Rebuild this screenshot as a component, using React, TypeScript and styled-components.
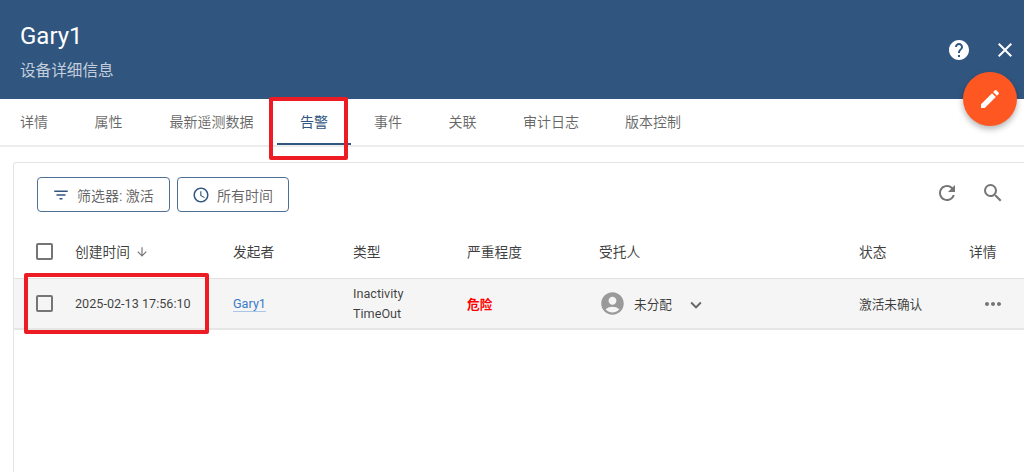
import React from 'react';
import styled, { createGlobalStyle } from 'styled-components';
import {
  MdAccessTime,
  MdAccountCircle,
  MdArrowDownward,
  MdClose,
  MdEdit,
  MdExpandMore,
  MdFilterList,
  MdHelp,
  MdMoreHoriz,
  MdRefresh,
  MdSearch,
} from 'react-icons/md';

const GlobalStyle = createGlobalStyle`
  html, body {
    margin: 0;
    padding: 0;
    width: 1024px;
    height: 472px;
    overflow: hidden;
    background: #fff;
    font-family: Roboto, "Noto Sans CJK SC", sans-serif;
  }
  * { box-sizing: border-box; }
`;

const Page = styled.div`
  position: relative;
  width: 1024px;
  height: 472px;
  overflow: hidden;
`;

const Header = styled.header`
  height: 99px;
  background: #305680;
  color: #fff;
  display: flex;
  justify-content: space-between;
  padding: 22px 7px 0 20px;
`;

const Title = styled.div`
  font-size: 24px;
  line-height: 28px;
`;

const Subtitle = styled.div`
  font-size: 15.6px;
  line-height: 20px;
  margin-top: 11px;
  color: rgba(255, 255, 255, 0.72);
`;

const HeaderActions = styled.div`
  display: flex;
  gap: 22px;
  padding-top: 16px;
  font-size: 24px;
  height: 40px;
`;

const Fab = styled.button`
  position: absolute;
  left: 963px;
  top: 72px;
  width: 54px;
  height: 54px;
  border: 0;
  border-radius: 50%;
  background: #ff5722;
  color: #fff;
  display: flex;
  align-items: center;
  justify-content: center;
  font-size: 24px;
  box-shadow: 0 3px 6px rgba(0, 0, 0, 0.3);
`;

const Tabs = styled.nav`
  height: 48px;
  display: flex;
  border-bottom: 2px solid #ececec;
`;

const Tab = styled.div<{ $width: number; $active?: boolean; $first?: boolean }>`
  width: ${p => p.$width}px;
  height: 46px;
  margin-left: ${p => (p.$first ? -3 : 0)}px;
  display: flex;
  align-items: center;
  justify-content: center;
  font-size: 14px;
  color: ${p => (p.$active ? '#305680' : 'rgba(0, 0, 0, 0.6)')};
  border-bottom: 2px solid ${p => (p.$active ? '#305680' : 'transparent')};
`;

const Card = styled.section`
  margin: 15px -10px 0 13px;
  border: 1px solid #e4e4e4;
  border-bottom: 0;
  border-radius: 3px 0 0 0;
  height: 325px;
`;

const Toolbar = styled.div`
  height: 49px;
  padding: 14px 28px 0 23px;
  display: flex;
  align-items: flex-start;
  gap: 7px;
`;

const OutlineButton = styled.button<{ $width: number }>`
  width: ${p => p.$width}px;
  height: 35px;
  padding: 0 0 0 14px;
  background: #fff;
  border: 1px solid #4f7096;
  border-radius: 4px;
  display: flex;
  align-items: center;
  gap: 7px;
  font-family: inherit;
  font-size: 14px;
  color: rgba(0, 0, 0, 0.62);
  white-space: nowrap;
  svg {
    color: #305680;
    font-size: 18px;
    flex: none;
  }
`;

const ToolbarIcons = styled.div`
  margin-left: auto;
  display: flex;
  gap: 22px;
  padding-top: 4px;
  font-size: 24px;
  color: #757575;
`;

const Row = styled.div<{ $head?: boolean }>`
  display: grid;
  grid-template-columns: 39px 158px 120px 114px 132px 260px 110px 1fr;
  align-items: center;
  padding-left: 22px;
  padding-top: ${p => (p.$head ? 12 : 0)}px;
  height: ${p => (p.$head ? 67 : 51)}px;
  font-size: ${p => (p.$head ? 13.75 : 12.65)}px;
  color: rgba(0, 0, 0, 0.76);
  background: ${p => (p.$head ? '#fff' : '#f5f5f5')};
  border-bottom: ${p => (p.$head ? '1px solid #e2e2e2' : '2px solid #e6e6e6')};
`;

const Box = styled.span`
  display: block;
  width: 17px;
  height: 17px;
  border: 2px solid #757575;
  border-radius: 2px;
`;

const SortCell = styled.span`
  display: flex;
  align-items: center;
  gap: 5px;
  svg {
    font-size: 14px;
    color: #757575;
    margin-top: 2px;
  }
`;

const EntityLink = styled.span`
  justify-self: start;
  color: #3a7bc8;
  border-bottom: 1px solid #a9c6e8;
  line-height: 15px;
`;

const TypeCell = styled.span`
  line-height: 20px;
`;

const Severity = styled.span`
  color: #ff0000;
  font-weight: 700;
`;

const Assignee = styled.span`
  display: flex;
  align-items: center;
  color: rgba(0, 0, 0, 0.76);
  svg:first-child {
    font-size: 27px;
    color: #9a9a9a;
    margin-right: 8px;
  }
  svg:last-child {
    font-size: 22px;
    color: #666;
    margin-left: 13px;
    margin-top: 2px;
  }
`;

const MoreIcon = styled(MdMoreHoriz)`
  font-size: 24px;
  color: #757575;
  margin-left: 12px;
`;

const Callout = styled.div<{ $x: number; $y: number; $w: number; $h: number }>`
  position: absolute;
  left: ${p => p.$x}px;
  top: ${p => p.$y}px;
  width: ${p => p.$w}px;
  height: ${p => p.$h}px;
  border: 4px solid #ed1c24;
  border-radius: 2px;
  pointer-events: none;
`;

const tabs = [
  { label: '详情', width: 74 },
  { label: '属性', width: 75 },
  { label: '最新遥测数据', width: 131 },
  { label: '告警', width: 74 },
  { label: '事件', width: 74 },
  { label: '关联', width: 75 },
  { label: '审计日志', width: 102 },
  { label: '版本控制', width: 102 },
];

export default function App() {
  return (
    <Page>
      <GlobalStyle />
      <Header>
        <div>
          <Title>Gary1</Title>
          <Subtitle>设备详细信息</Subtitle>
        </div>
        <HeaderActions>
          <MdHelp />
          <MdClose />
        </HeaderActions>
      </Header>
      <Fab>
        <MdEdit />
      </Fab>
      <Tabs>
        {tabs.map((t, i) => (
          <Tab key={t.label} $first={i === 0} $width={t.width} $active={t.label === '告警'}>
            {t.label}
          </Tab>
        ))}
      </Tabs>
      <Card>
        <Toolbar>
          <OutlineButton $width={133}>
            <MdFilterList />
            筛选器: 激活
          </OutlineButton>
          <OutlineButton $width={112}>
            <MdAccessTime />
            所有时间
          </OutlineButton>
          <ToolbarIcons>
            <MdRefresh />
            <MdSearch />
          </ToolbarIcons>
        </Toolbar>
        <Row $head>
          <Box />
          <SortCell>
            创建时间
            <MdArrowDownward />
          </SortCell>
          <span>发起者</span>
          <span>类型</span>
          <span>严重程度</span>
          <span>受托人</span>
          <span>状态</span>
          <span>详情</span>
        </Row>
        <Row>
          <Box />
          <span>2025-02-13 17:56:10</span>
          <EntityLink>Gary1</EntityLink>
          <TypeCell>
            Inactivity
            <br />
            TimeOut
          </TypeCell>
          <Severity>危险</Severity>
          <Assignee>
            <MdAccountCircle />
            未分配
            <MdExpandMore />
          </Assignee>
          <span>激活未确认</span>
          <MoreIcon />
        </Row>
      </Card>
      <Callout $x={269} $y={97} $w={79} $h={63} />
      <Callout $x={24} $y={273} $w={185} $h={61} />
    </Page>
  );
}
